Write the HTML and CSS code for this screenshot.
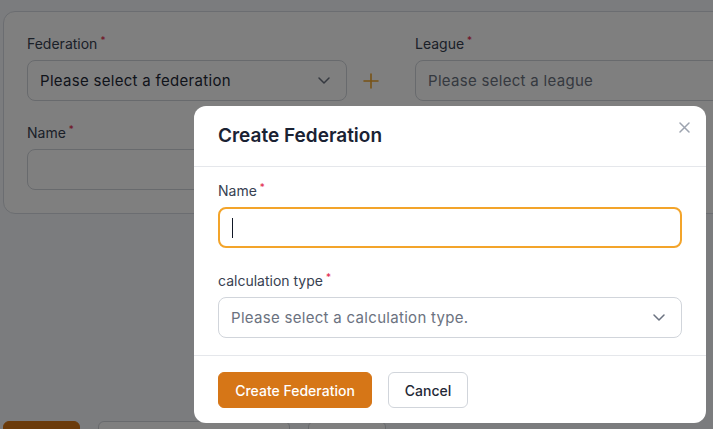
FILE: index.html
```html
<!DOCTYPE html>
<html lang="en">
<head>
<meta charset="utf-8">
<title>Create Federation</title>
<link rel="stylesheet" href="styles.css">
</head>
<body>
<div class="page">
  <section class="card">
    <div class="row">
      <div class="field fed">
        <label class="label">Federation<span class="req">*</span></label>
        <div class="select">
          <span class="value">Please select a federation</span>
          <svg class="chev" width="12" height="7" viewBox="0 0 12 7"><path d="M1 1l5 5 5-5" fill="none" stroke="#6b7280" stroke-width="1.5" stroke-linecap="round" stroke-linejoin="round"/></svg>
        </div>
      </div>
      <button class="add" type="button" aria-label="Add federation">
        <svg width="16" height="16" viewBox="0 0 16 16"><path d="M8 1v14M1 8h14" stroke="#f0a52b" stroke-width="1.6" stroke-linecap="round"/></svg>
      </button>
      <div class="field league">
        <label class="label">League<span class="req">*</span></label>
        <div class="select"><span class="placeholder">Please select a league</span></div>
      </div>
    </div>
    <div class="field name">
      <label class="label">Name<span class="req">*</span></label>
      <div class="input"></div>
    </div>
  </section>
  <div class="actions">
    <span class="bg-btn primary"></span>
    <span class="bg-btn wide"></span>
    <span class="bg-btn narrow"></span>
  </div>
</div>

<div class="overlay"></div>

<div class="modal" role="dialog">
  <header class="modal-head">
    <h2 class="modal-title">Create Federation</h2>
    <button class="close" type="button" aria-label="Close">
      <svg width="11" height="11" viewBox="0 0 11 11"><path d="M1 1l9 9M10 1l-9 9" stroke="#9ca3af" stroke-width="1.5" stroke-linecap="round"/></svg>
    </button>
  </header>
  <div class="modal-body">
    <label class="label m">Name<span class="req">*</span></label>
    <div class="input focus"><span class="caret"></span></div>
    <label class="label m second">calculation type<span class="req">*</span></label>
    <div class="select m">
      <span class="placeholder">Please select a calculation type.</span>
      <svg class="chev" width="12" height="7" viewBox="0 0 12 7"><path d="M1 1l5 5 5-5" fill="none" stroke="#6b7280" stroke-width="1.5" stroke-linecap="round" stroke-linejoin="round"/></svg>
    </div>
  </div>
  <footer class="modal-foot">
    <button class="btn btn-primary" type="button">Create Federation</button>
    <button class="btn btn-default" type="button">Cancel</button>
  </footer>
</div>
</body>
</html>
```

FILE: styles.css
```css
* { box-sizing: border-box; }

html, body {
  margin: 0;
  height: 429px;
  overflow: hidden;
}

body {
  background: #f6f8fc;
  font-family: Inter, "Open Sans", sans-serif;
  color: #1f2937;
}

.page {
  padding: 11px 0 0 3px;
  width: 713px;
  overflow: hidden;
}

.card {
  width: 790px;
  background: #ffffff;
  border: 1px solid #d7dbe2;
  border-radius: 12px;
  padding: 22px 0 23px 23px;
}

.row {
  display: flex;
  align-items: flex-end;
}

.field.fed { width: 320px; }
.field.league { width: 340px; margin-left: 20px; }
.field.name { width: 320px; margin-top: 22px; }

.label {
  display: block;
  font-size: 14px;
  line-height: 20px;
  color: #374151;
  margin-bottom: 6px;
}

.req {
  color: #e11d48;
  font-size: 10px;
  vertical-align: top;
  position: relative;
  top: -4px;
  margin-left: 3px;
}

.select,
.input {
  height: 41px;
  border: 1px solid #d1d5db;
  border-radius: 8px;
  background: #ffffff;
  padding: 0 12px;
  display: flex;
  align-items: center;
  justify-content: space-between;
  font-size: 15px;
  letter-spacing: 0.3px;
}

.select .value { color: #1f2937; }
.placeholder { color: #6b7280; }

.chev { margin-right: 4px; }

.add {
  width: 48px;
  height: 41px;
  border: 0;
  background: transparent;
  padding: 0;
  display: flex;
  align-items: center;
  justify-content: center;
}

.actions {
  display: flex;
  gap: 18px;
  margin-top: 207px;
}

.bg-btn {
  height: 36px;
  border-radius: 6px;
  background: #ffffff;
  border: 1px solid #d1d5db;
}
.bg-btn.primary { width: 77px; background: #d67617; border-color: #d67617; }
.bg-btn.wide { width: 192px; }
.bg-btn.narrow { width: 78px; }

.overlay {
  position: fixed;
  inset: 0;
  background: rgba(0, 0, 0, 0.5);
}

.modal {
  position: fixed;
  left: 194px;
  top: 106px;
  width: 512px;
  background: #ffffff;
  border-radius: 12px;
}

.modal-head {
  height: 61px;
  padding: 16px 24px;
  border-bottom: 1px solid #e5e7eb;
}

.modal-title {
  margin: 0;
  font-size: 19px;
  line-height: 28px;
  font-weight: 600;
  color: #1a2233;
}

.close {
  position: absolute;
  top: 11px;
  right: 12px;
  width: 20px;
  height: 20px;
  border: 0;
  padding: 0;
  background: transparent;
  display: flex;
  align-items: center;
  justify-content: center;
}

.modal-body {
  padding: 14px 24px 17px;
  border-bottom: 1px solid #e5e7eb;
}

.label.second { margin-top: 23px; }

.input.focus {
  border: 2px solid #f3a42a;
  justify-content: flex-start;
}

.caret {
  width: 1px;
  height: 20px;
  background: #111827;
}

.modal-foot {
  display: flex;
  gap: 16px;
  padding: 16px 24px 15px;
}

.btn {
  height: 36px;
  border-radius: 6px;
  font-family: inherit;
  font-size: 14px;
  font-weight: 500;
  padding: 0;
  white-space: nowrap;
  cursor: pointer;
}

.btn-primary {
  width: 154px;
  background: #d67617;
  border: 1px solid #d67617;
  color: #ffffff;
}

.btn-default {
  width: 80px;
  background: #ffffff;
  border: 1px solid #d1d5db;
  color: #1f2937;
}
```
